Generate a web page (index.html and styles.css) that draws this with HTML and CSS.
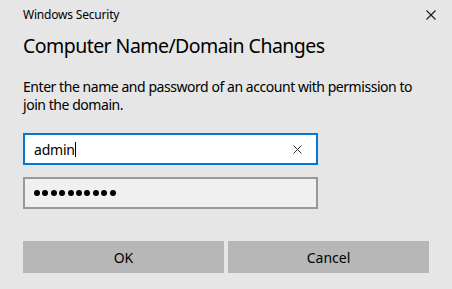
FILE: index.html
```html
<!DOCTYPE html>
<html>
<head>
<meta charset="utf-8">
<link rel="stylesheet" href="styles.css">
</head>
<body>
<div class="dialog">
  <div class="titlebar">
    <span class="app">Windows Security</span>
    <span class="close"><svg width="10" height="10" viewBox="0 0 10 10"><path d="M0.5 0.5L9.5 9.5M9.5 0.5L0.5 9.5" stroke="#1a1a1a" stroke-width="1.1" fill="none"/></svg></span>
  </div>
  <h1 class="heading">Computer Name/Domain Changes</h1>
  <p class="desc">Enter the name and password of an account with permission to join the domain.</p>
  <div class="field focused">
    <span class="value">admin</span><span class="caret"></span>
    <span class="clear"><svg width="9" height="9" viewBox="0 0 9 9"><path d="M0.5 0.5L8.5 8.5M8.5 0.5L0.5 8.5" stroke="#333" stroke-width="1" fill="none"/></svg></span>
  </div>
  <div class="field pwd">
    <span class="dot"></span><span class="dot"></span><span class="dot"></span><span class="dot"></span><span class="dot"></span><span class="dot"></span><span class="dot"></span><span class="dot"></span><span class="dot"></span><span class="dot"></span>
  </div>
  <div class="buttons">
    <button class="btn">OK</button>
    <button class="btn">Cancel</button>
  </div>
</div>
</body>
</html>
```
FILE: styles.css
```css
html, body {
  margin: 0;
  padding: 0;
  background: #e6e6e6;
}
body {
  width: 452px;
  height: 289px;
  overflow: hidden;
  font-family: "Noto Sans", "Open Sans", sans-serif;
  color: #000;
}
.dialog {
  padding: 0 23px 0 23px;
}
.titlebar {
  display: flex;
  justify-content: space-between;
  align-items: center;
  height: 29px;
  margin-right: -7px;
}
.app {
  font-size: 12px;
  letter-spacing: -0.2px;
  color: #000;
  padding-bottom: 1px;
}
.close {
  display: flex;
  width: 10px;
  height: 10px;
}
.heading {
  font-weight: 400;
  font-size: 19.5px;
  letter-spacing: -0.55px;
  margin: 0;
  line-height: 33px;
  color: #000;
}
.desc {
  margin: 16px 0 0 0;
  font-size: 14px;
  letter-spacing: -0.45px;
  line-height: 18px;
  color: #000;
}
.field {
  box-sizing: border-box;
  width: 295px;
  height: 32px;
  border: 2px solid #999;
  display: flex;
  align-items: center;
  padding: 0 8px 0 9px;
  font-size: 14px;
  letter-spacing: -0.2px;
}
.focused {
  margin-top: 19px;
  border-color: #0078d7;
  background: #fff;
}
.value {
  color: #000;
}
.caret {
  width: 1px;
  height: 15px;
  background: #000;
  margin-left: 0;
}
.clear {
  margin-left: auto;
  display: flex;
  margin-right: 6px;
}
.pwd {
  margin-top: 12px;
  background: #f0f0f0;
  gap: 2.4px;
  padding-left: 9px;
}
.dot {
  width: 6px;
  height: 6px;
  border-radius: 50%;
  background: #000;
}
.buttons {
  display: flex;
  gap: 4px;
  margin-top: 32px;
}
.btn {
  flex: 1;
  height: 32px;
  border: none;
  background: #b7b7b7;
  font-family: "Noto Sans", "Open Sans", sans-serif;
  font-size: 14px;
  color: #000;
  padding: 0;
}
```
